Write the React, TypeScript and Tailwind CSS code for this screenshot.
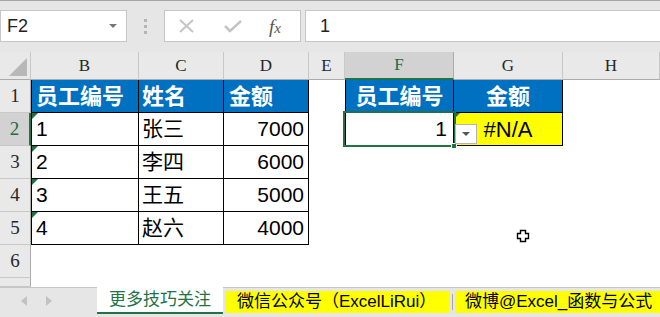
import type { ReactNode } from 'react';

const FONT = "font-['Liberation_Sans','Noto_Sans_CJK_SC',sans-serif]";

function Tri() {
  return <span className="absolute left-0 top-0 h-0 w-0 border-l-[6px] border-b-[6px] border-l-[#1e7145] border-b-transparent" />;
}

function ColHead({ children, active }: { children?: ReactNode; active?: boolean }) {
  return (
    <div
      className={`flex items-center justify-center border-r border-b font-['Liberation_Serif',serif] text-[17px] ${
        active
          ? 'bg-[#d2d2d2] text-[#1e6b41] border-r-[#ababab] border-b-2 border-b-[#217346]'
          : 'bg-[#e9e9e9] text-[#262626] border-r-[#c8c8c8] border-b-[#ababab]'
      }`}
    >
      {children}
    </div>
  );
}

function RowHead({ children, active }: { children?: ReactNode; active?: boolean }) {
  return (
    <div
      className={`flex items-center justify-center border-b border-b-[#c8c8c8] border-r font-['Liberation_Serif',serif] text-[19px] ${
        active ? 'bg-[#d2d2d2] text-[#1e6b41] border-r-2 border-r-[#217346]' : 'bg-[#e9e9e9] text-[#262626] border-r-[#ababab]'
      }`}
    >
      {children}
    </div>
  );
}

const head = 'bg-[#0070c0] text-white font-bold text-[22px] flex items-center border-r border-b border-black';
const cell = 'relative bg-white text-black text-[21px] flex items-center border-r border-b border-black';

export default function App() {
  const rows = [
    ['1', '张三', '7000'],
    ['2', '李四', '6000'],
    ['3', '王五', '5000'],
    ['4', '赵六', '4000'],
  ];

  return (
    <div className={`w-[660px] h-[317px] overflow-hidden bg-white flex flex-col ${FONT}`}>
      {/* formula bar */}
      <div className="h-[52px] shrink-0 bg-[#e6e6e6] border-t border-[#a6a6a6] flex items-start pt-[9px]">
        <div className="w-[127px] h-[32px] bg-white border border-[#c6c6c6] flex items-center justify-between pl-[6px] pr-[9px]">
          <span className="text-[18px] text-[#222]">F2</span>
          <span className="h-0 w-0 border-x-[4px] border-t-[4px] border-x-transparent border-t-[#777]" />
        </div>
        <div className="w-[37px] h-[32px] flex flex-col items-center justify-center gap-[3px]">
          <span className="w-[3px] h-[3px] bg-[#b4b4b4]" />
          <span className="w-[3px] h-[3px] bg-[#b4b4b4]" />
          <span className="w-[3px] h-[3px] bg-[#b4b4b4]" />
        </div>
        <div className="w-[137px] h-[32px] bg-white border border-[#c6c6c6] flex items-center pl-[13px]">
          <svg width="18" height="14" viewBox="0 0 18 14" className="mr-[28px]">
            <path d="M2 1 L15 13 M15 1 L2 13" stroke="#c4c4c4" strokeWidth="2" />
          </svg>
          <svg width="18" height="14" viewBox="0 0 18 14" className="mr-[27px]">
            <path d="M1 7 L6 12 L17 2" stroke="#c4c4c4" strokeWidth="2.5" fill="none" />
          </svg>
          <span className="font-['Liberation_Serif',serif] italic text-[19px] text-[#555] leading-none">
            f<span className="text-[15px]">x</span>
          </span>
        </div>
        <div className="ml-[4px] flex-1 h-[32px] bg-white border border-r-0 border-[#c6c6c6] flex items-center pl-[14px]">
          <span className="text-[18px] text-[#222]">1</span>
        </div>
      </div>

      {/* sheet */}
      <div className="relative grid grid-cols-[31px_108px_85px_85px_36px_109px_109px_1fr] grid-rows-[28px_33px_33px_33px_33px_33px_33px_9px] h-[235px] shrink-0">
        <div className="relative bg-[#e9e9e9] border-r border-b border-r-[#c8c8c8] border-b-[#ababab]">
          <span className="absolute right-[3px] bottom-[3px] h-0 w-0 border-l-[18px] border-t-[18px] border-l-transparent border-t-transparent border-r-0 border-b-0 [border-right:0] [border-bottom:18px_solid_#b8b8b8] [border-left:18px_solid_transparent] [border-top:0]" />
        </div>
        <ColHead>B</ColHead>
        <ColHead>C</ColHead>
        <ColHead>D</ColHead>
        <ColHead>E</ColHead>
        <ColHead active>F</ColHead>
        <ColHead>G</ColHead>
        <ColHead>H</ColHead>

        {/* row 1 */}
        <RowHead>1</RowHead>
        <div className={`${head} border-l pl-[4px]`}>员工编号</div>
        <div className={`${head} pl-[3px]`}>姓名</div>
        <div className={`${head} pl-[5px]`}>金额</div>
        <div />
        <div className={`${head} border-l justify-center`}>员工编号</div>
        <div className={`${head} justify-center`}>金额</div>
        <div />

        {rows.map((r, i) => (
          <div key={r[0]} className="contents">
            <RowHead active={i === 0}>{i + 2}</RowHead>
            <div className={`${cell} border-l pl-[4px]`}>
              <Tri />
              {r[0]}
            </div>
            <div className={`${cell} pl-[3px] text-[20px]`}>{r[1]}</div>
            <div className={`${cell} justify-end pr-[4px]`}>{r[2]}</div>
            <div />
            {i === 0 ? (
              <>
                <div className={`${cell} border-l justify-end pr-[6px]`}>1</div>
                <div className={`${cell} !bg-[#ffff00] justify-center text-[22px]`}>
                  <Tri />
                  #N/A
                </div>
              </>
            ) : (
              <>
                <div />
                <div />
              </>
            )}
            <div />
          </div>
        ))}

        <RowHead>6</RowHead>
        <div className="col-span-7" />
        <RowHead />
        <div className="col-span-7" />

        {/* selection on F2 */}
        <div className="absolute left-[343px] top-[59px] w-[113px] h-[36px] border-2 border-[#217346]" />
        <div className="absolute left-[451px] top-[91px] w-[6px] h-[6px] bg-[#217346] border border-white" />
        {/* dropdown button */}
        <div className="absolute left-[455px] top-[72px] w-[22px] h-[20px] bg-white border border-[#b4b4b4] flex items-center justify-center">
          <span className="h-0 w-0 border-x-[4px] border-t-[4px] border-x-transparent border-t-[#555]" />
        </div>
        {/* cursor */}
        <svg className="absolute left-[516px] top-[177px]" width="14" height="14" viewBox="0 0 14 14">
          <path d="M4.5 1.5 H9.5 V4.5 H12.5 V9.5 H9.5 V12.5 H4.5 V9.5 H1.5 V4.5 H4.5 Z" fill="white" stroke="black" strokeWidth="1.4" />
        </svg>
      </div>

      {/* sheet tabs */}
      <div className="h-[30px] shrink-0 bg-[#e6e6e6] border-t border-[#c6c6c6] flex items-start">
        <div className="w-[97px] h-[26px] flex items-center pl-[21px] gap-[19px]">
          <span className="h-0 w-0 border-y-[5px] border-r-[6px] border-y-transparent border-r-[#c2c2c2]" />
          <span className="h-0 w-0 border-y-[5px] border-l-[6px] border-y-transparent border-l-[#c2c2c2]" />
        </div>
        <div className="-mt-px w-[126px] h-[27px] bg-white border-b-2 border-[#217346] flex items-center justify-center text-[17px] text-[#217346]">
          更多技巧关注
        </div>
        <div className="ml-[2px] mt-[3px] w-[225px] h-[22px] bg-[#ffff00] flex items-center pl-[12px] text-[17px] text-black">
          微信公众号（ExcelLiRui）
        </div>
        <div className="mx-[2px] mt-[6px] w-px h-[16px] bg-[#a6a6a6]" />
        <div className="mt-[3px] flex-1 h-[22px] bg-[#ffff00] flex items-center pl-[10px] text-[17px] text-black whitespace-nowrap">
          微博@Excel_函数与公式
        </div>
      </div>
    </div>
  );
}
